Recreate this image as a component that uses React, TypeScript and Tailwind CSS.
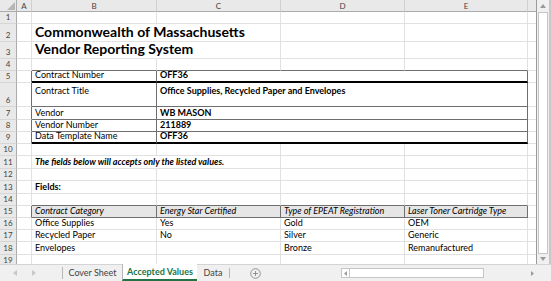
import React from 'react';

// column widths (A..F), F is the partial column at the right edge
const W = {
  A: 'w-[15px]',
  B: 'w-[125px]',
  C: 'w-[124px]',
  D: 'w-[124px]',
  E: 'w-[123px]',
  CDE: 'w-[371px]',
  F: 'w-[9px]',
};

const GR = 'border-r border-r-[#e1e1e1]';
const GB = 'border-b border-b-[#e1e1e1]';
const DR = 'border-r border-r-[#6f6f6f]';
const DB = 'border-b border-b-[#6f6f6f]';
const KB = 'border-b-2 border-b-black';
const NR = 'border-r border-r-white';

interface CellProps {
  w: string;
  r?: string;
  b?: string;
  className?: string;
  children?: React.ReactNode;
}

function Cell({ w, r = GR, b = GB, className = '', children }: CellProps) {
  return (
    <div className={`shrink-0 h-full flex items-end pl-[3px] pb-[1px] whitespace-nowrap ${w} ${r} ${b} ${className}`}>
      {children}
    </div>
  );
}

function Row({ n, h, children }: { n: number | string; h: string; children: React.ReactNode }) {
  return (
    <div className={`flex ${h} shrink-0`}>
      <div className="w-[17px] shrink-0 h-full bg-[#e9e9e9] border-r border-r-[#ababab] border-b border-b-[#d6d6d6] flex items-end justify-center pb-[1px] text-[8px] leading-[10px] text-[#444]">
        {n}
      </div>
      {children}
    </div>
  );
}

function Blank({ n, h }: { n: number; h: string }) {
  return (
    <Row n={n} h={h}>
      <Cell w={W.A} />
      <Cell w={W.B} />
      <Cell w={W.C} />
      <Cell w={W.D} />
      <Cell w={W.E} />
      <Cell w={W.F} />
    </Row>
  );
}

function InfoRow({ n, h, label, value, b, top }: { n: number; h: string; label: string; value: string; b: string; top?: boolean }) {
  const align = top ? 'items-start pt-[3px]' : '';
  return (
    <Row n={n} h={h}>
      <Cell w={W.A} r={DR} />
      <Cell w={W.B} r={DR} b={b} className={align}>{label}</Cell>
      <Cell w={W.CDE} r={DR} b={b} className={`font-bold ${align}`}>{value}</Cell>
      <Cell w={W.F} />
    </Row>
  );
}

function DataRow({ n, h, v }: { n: number; h: string; v: string[] }) {
  return (
    <Row n={n} h={h}>
      <Cell w={W.A} />
      <Cell w={W.B}>{v[0]}</Cell>
      <Cell w={W.C}>{v[1]}</Cell>
      <Cell w={W.D}>{v[2]}</Cell>
      <Cell w={W.E}>{v[3]}</Cell>
      <Cell w={W.F} />
    </Row>
  );
}

function ColHeader({ w, label, last }: { w: string; label: string; last?: boolean }) {
  return (
    <div className={`shrink-0 h-full bg-[#e9e9e9] flex items-center justify-center text-[8px] text-[#444] border-b border-b-[#ababab] ${last ? '' : 'border-r border-r-[#d0d0d0]'} ${w}`}>
      {label}
    </div>
  );
}

export default function App() {
  return (
    <div className="w-[551px] h-[281px] bg-white flex flex-col overflow-hidden text-[9px] leading-[10px] text-black" style={{ fontFamily: 'Lato, "Open Sans", sans-serif' }}>
      <div className="flex h-[264px] shrink-0">
        {/* sheet */}
        <div className="w-[537px] h-full flex flex-col overflow-hidden border-r border-r-[#9a9a9a]">
          <div className="flex h-[12px] shrink-0">
            <div className="w-[17px] shrink-0 h-full bg-[#e9e9e9] border-r border-r-[#ababab] border-b border-b-[#ababab] flex items-end justify-end p-[1px]">
              <svg width="8" height="8" viewBox="0 0 8 8">
                <path d="M8 0 L8 8 L0 8 Z" fill="#b5b5b5" />
              </svg>
            </div>
            <ColHeader w={W.A} label="A" />
            <ColHeader w={W.B} label="B" />
            <ColHeader w={W.C} label="C" />
            <ColHeader w={W.D} label="D" />
            <ColHeader w={W.E} label="E" />
            <ColHeader w={W.F} label="" last />
          </div>

          <Blank n={1} h="h-[12px]" />
          <Row n={2} h="h-[18px]">
            <Cell w={W.A} />
            <Cell w={W.B} r={NR} className="text-[14px] font-bold leading-[16px] overflow-visible z-10 pb-[0px]">Commonwealth of Massachusetts</Cell>
            <Cell w={W.C} />
            <Cell w={W.D} />
            <Cell w={W.E} />
            <Cell w={W.F} />
          </Row>
          <Row n={3} h="h-[17px]">
            <Cell w={W.A} />
            <Cell w={W.B} r={NR} className="text-[14px] font-bold leading-[16px] overflow-visible z-10 pb-[0px]">Vendor Reporting System</Cell>
            <Cell w={W.C} />
            <Cell w={W.D} />
            <Cell w={W.E} />
            <Cell w={W.F} />
          </Row>
          <Row n={4} h="h-[12px]">
            <Cell w={W.A} />
            <Cell w={W.B} b={DB} />
            <Cell w={W.C} b={DB} />
            <Cell w={W.D} b={DB} />
            <Cell w={W.E} b={DB} />
            <Cell w={W.F} />
          </Row>
          <InfoRow n={5} h="h-[12px]" label="Contract Number" value="OFF36" b={KB} />
          <InfoRow n={6} h="h-[24px]" label="Contract Title" value="Office Supplies, Recycled Paper and Envelopes" b={DB} top />
          <InfoRow n={7} h="h-[13px]" label="Vendor" value="WB MASON" b={DB} />
          <InfoRow n={8} h="h-[12px]" label="Vendor Number" value="211889" b={DB} />
          <InfoRow n={9} h="h-[12px]" label="Data Template Name" value="OFF36" b={KB} />
          <Blank n={10} h="h-[12px]" />
          <Row n={11} h="h-[13px]">
            <Cell w={W.A} />
            <Cell w={W.B} r={NR} className="font-bold italic overflow-visible z-10">The fields below will accepts only the listed values.</Cell>
            <Cell w={W.C} />
            <Cell w={W.D} />
            <Cell w={W.E} />
            <Cell w={W.F} />
          </Row>
          <Blank n={12} h="h-[12px]" />
          <Row n={13} h="h-[13px]">
            <Cell w={W.A} />
            <Cell w={W.B} className="font-bold">Fields:</Cell>
            <Cell w={W.C} />
            <Cell w={W.D} />
            <Cell w={W.E} />
            <Cell w={W.F} />
          </Row>
          <Row n={14} h="h-[12px]">
            <Cell w={W.A} />
            <Cell w={W.B} b={DB} />
            <Cell w={W.C} b={DB} />
            <Cell w={W.D} b={DB} />
            <Cell w={W.E} b={DB} />
            <Cell w={W.F} />
          </Row>
          <Row n={15} h="h-[12px]">
            <Cell w={W.A} r={DR} />
            <Cell w={W.B} r={DR} b={DB} className="italic bg-[#e7e6e6]">Contract Category</Cell>
            <Cell w={W.C} r={DR} b={DB} className="italic bg-[#e7e6e6]">Energy Star Certified</Cell>
            <Cell w={W.D} r={DR} b={DB} className="italic bg-[#e7e6e6]">Type of EPEAT Registration</Cell>
            <Cell w={W.E} r={DR} b={DB} className="italic bg-[#e7e6e6]">Laser Toner Cartridge Type</Cell>
            <Cell w={W.F} />
          </Row>
          <DataRow n={16} h="h-[12px]" v={['Office Supplies', 'Yes', 'Gold', 'OEM']} />
          <DataRow n={17} h="h-[12px]" v={['Recycled Paper', 'No', 'Silver', 'Generic']} />
          <DataRow n={18} h="h-[13px]" v={['Envelopes', '', 'Bronze', 'Remanufactured']} />
          <Blank n={19} h="h-[12px]" />
        </div>

        {/* vertical scrollbar */}
        <div className="w-[14px] h-full bg-[#f0f0f0] flex flex-col items-center border-r-2 border-r-[#c8c8c8]">
          <div className="h-[12px] w-full flex items-center justify-center">
            <svg width="6" height="4" viewBox="0 0 6 4"><path d="M3 0 L6 4 L0 4 Z" fill="#9a9a9a" /></svg>
          </div>
          <div className="flex-1 w-[10px] bg-white border border-[#c6c6c6]" />
          <div className="h-[10px] w-full flex items-center justify-center">
            <svg width="6" height="4" viewBox="0 0 6 4"><path d="M0 0 L6 0 L3 4 Z" fill="#9a9a9a" /></svg>
          </div>
        </div>
      </div>

      {/* sheet tabs */}
      <div className="flex-1 flex bg-[#f0f0f0] border-t border-t-[#d4d4d4] text-[9px] text-[#444]">
        <div className="w-[62px] shrink-0 flex items-center pl-[13px] gap-[15px] text-[#c0c0c0]">
          <svg width="4" height="6" viewBox="0 0 4 6"><path d="M4 0 L4 6 L0 3 Z" fill="#c8c8c8" /></svg>
          <svg width="4" height="6" viewBox="0 0 4 6"><path d="M0 0 L4 3 L0 6 Z" fill="#c8c8c8" /></svg>
        </div>
        <div className="w-[60px] shrink-0 flex items-center justify-center border-l border-l-[#b8b8b8] my-[2px]">Cover Sheet</div>
        <div className="w-[75px] shrink-0 flex items-center justify-center bg-white border-l border-l-[#b8b8b8] border-b-2 border-b-[#217346] font-bold text-[#217346] -mt-px">Accepted Values</div>
        <div className="w-[32px] shrink-0 flex items-center justify-center">Data</div>
        <div className="w-px bg-[#b8b8b8] my-[3px]" />
        <div className="w-[50px] shrink-0 flex items-center justify-center">
          <svg width="11" height="11" viewBox="0 0 11 11">
            <circle cx="5.5" cy="5.5" r="4.8" fill="none" stroke="#8a8a8a" strokeWidth="0.9" />
            <path d="M5.5 3 V8 M3 5.5 H8" stroke="#8a8a8a" strokeWidth="0.9" />
          </svg>
        </div>
        <div className="w-[61px] shrink-0" />
        {/* horizontal scrollbar */}
        <div className="w-[196px] shrink-0 flex items-center py-[3px]">
          <div className="w-[9px] h-full flex items-center justify-center bg-white border border-[#c6c6c6]">
            <svg width="3" height="5" viewBox="0 0 3 5"><path d="M3 0 L3 5 L0 2.5 Z" fill="#9a9a9a" /></svg>
          </div>
          <div className="w-[134px] h-full bg-white border border-[#c6c6c6] border-l-0" />
          <div className="flex-1" />
          <div className="w-[9px] h-full flex items-center justify-center">
            <svg width="3" height="5" viewBox="0 0 3 5"><path d="M0 0 L3 2.5 L0 5 Z" fill="#9a9a9a" /></svg>
          </div>
        </div>
      </div>
    </div>
  );
}
